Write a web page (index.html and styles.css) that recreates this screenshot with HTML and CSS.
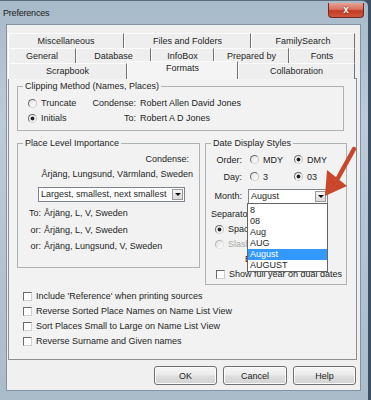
FILE: index.html
```html
<!DOCTYPE html>
<html lang="en">
<head>
    <meta charset="UTF-8">
    <meta name="viewport" content="width=device-width, initial-scale=1.0">
    <link rel="stylesheet" href="styles.css">
</head>
<body>
    <div class="window">
        <div class="titlebar">
            <span class="title">Preferences</span>
            <span class="close">x</span>
        </div>

        <div class="client">
            <div class="tabs">
                <div class="tab-row row-1">
                    <div class="tab">Miscellaneous</div>
                    <div class="tab">Files and Folders</div>
                    <div class="tab">FamilySearch</div>
                </div>
                <div class="tab-row row-2">
                    <div class="tab">General</div>
                    <div class="tab">Database</div>
                    <div class="tab">InfoBox</div>
                    <div class="tab">Prepared by</div>
                    <div class="tab">Fonts</div>
                </div>
                <div class="tab-row row-3">
                    <div class="tab">Scrapbook</div>
                    <div class="tab active">Formats</div>
                    <div class="tab">Collaboration</div>
                </div>
            </div>

            <div class="panel">
                <fieldset class="group clip">
                    <legend>Clipping Method (Names, Places)</legend>
                    <div class="clip-grid">
                        <label class="opt"><input type="radio" name="clip" class="radio">Truncate</label>
                        <span class="key">Condense:</span>
                        <span class="val">Robert Allen David Jones</span>
                        <label class="opt"><input type="radio" name="clip" class="radio" checked>Initials</label>
                        <span class="key">To:</span>
                        <span class="val">Robert A D Jones</span>
                    </div>
                </fieldset>

                <div class="pair">
                    <fieldset class="group place">
                        <legend>Place Level Importance</legend>
                        <div class="cond">Condense:</div>
                        <div class="cond-place">Årjäng, Lungsund, Värmland, Sweden</div>
                        <div class="select place-select">
                            <span class="select-text">Largest, smallest, next smallest</span>
                            <span class="select-btn"></span>
                        </div>
                        <div class="forms">
                            <span class="key">To:</span><span>Årjäng, L, V, Sweden</span>
                            <span class="key">or:</span><span>Årjäng, L, V, Sweden</span>
                            <span class="key">or:</span><span>Årjäng, Lungsund, V, Sweden</span>
                        </div>
                    </fieldset>

                    <fieldset class="group date">
                        <legend>Date Display Styles</legend>
                        <div class="date-body">
                            <div class="date-row">
                                <span class="dlabel">Order:</span>
                                <label class="opt first"><input type="radio" name="order" class="radio">MDY</label>
                                <label class="opt"><input type="radio" name="order" class="radio" checked>DMY</label>
                            </div>
                            <div class="date-row">
                                <span class="dlabel">Day:</span>
                                <label class="opt first"><input type="radio" name="day" class="radio">3</label>
                                <label class="opt"><input type="radio" name="day" class="radio" checked>03</label>
                            </div>
                            <div class="month-row">
                                <span class="dlabel">Month:</span>
                                <div class="select month">
                                    <span class="select-text">August</span>
                                    <span class="select-btn"></span>
                                    <div class="listbox">
                                        <div>8</div>
                                        <div>08</div>
                                        <div>Aug</div>
                                        <div>AUG</div>
                                        <div class="sel">August</div>
                                        <div>AUGUST</div>
                                    </div>
                                </div>
                            </div>
                            <div class="line sep-label">Separator:</div>
                            <label class="line opt indent-radio"><input type="radio" name="sep" class="radio" checked>Space</label>
                            <label class="line opt indent-radio disabled"><input type="radio" name="sep" class="radio" disabled>Slash</label>
                            <div class="line indent-b">Both</div>
                            <label class="line opt indent-check"><input type="checkbox" class="check">Show full year on dual dates</label>
                        </div>
                    </fieldset>
                </div>

                <div class="options">
                    <label class="opt"><input type="checkbox" class="check">Include 'Reference' when printing sources</label>
                    <label class="opt"><input type="checkbox" class="check">Reverse Sorted Place Names on Name List View</label>
                    <label class="opt"><input type="checkbox" class="check">Sort Places Small to Large on Name List View</label>
                    <label class="opt"><input type="checkbox" class="check">Reverse Surname and Given names</label>
                </div>
            </div>

            <div class="buttons">
                <button type="button" class="btn">OK</button>
                <button type="button" class="btn wide">Cancel</button>
                <button type="button" class="btn">Help</button>
            </div>
        </div>
    </div>

    <svg class="arrow" width="371" height="400" viewBox="0 0 371 400">
        <line x1="354" y1="149" x2="338" y2="178" stroke="#c9482b" stroke-width="4.5" stroke-linecap="round"/>
        <polygon points="325,196 327,170 347,186" fill="#c9482b"/>
    </svg>
</body>
</html>
```

FILE: styles.css
```css
body {
    margin: 0;
    width: 371px;
    height: 400px;
    overflow: hidden;
    background: #3d4f63;
    font-family: "Liberation Sans", Arial, sans-serif;
    font-size: 9px;
    color: #1e1e1e;
}

.window {
    width: 368px;
    height: 400px;
    box-sizing: border-box;
    border-top: 1px solid #5d6d7a;
    border-radius: 0 6px 0 0;
    background: linear-gradient(#a7bac9, #bccbd7 30%, #aabcca);
}

.titlebar {
    display: flex;
    height: 23px;
}

.title {
    margin: 7px 0 0 3px;
    line-height: 11px;
    letter-spacing: -0.2px;
    color: #1b1b1b;
}

.close {
    margin: 2px 4px 0 auto;
    width: 36px;
    height: 15px;
    box-sizing: border-box;
    border: 1px solid #6e2a22;
    border-top: none;
    border-radius: 0 0 4px 4px;
    background: linear-gradient(#e8a294, #d9705c 45%, #c53b24 55%, #d0553c);
    color: #fff;
    font-weight: bold;
    font-size: 10px;
    line-height: 13px;
    text-align: center;
    text-shadow: 0 0 2px #4a1a12;
}

.client {
    margin: 0 7px 0 6px;
    height: 367px;
    box-sizing: border-box;
    border: 1px solid #8393a1;
    background: #f0f0f0;
    padding-top: 8px;
}

/* tabs */
.tabs {
    margin-left: 1px;
    width: 347px;
}

.tab-row {
    display: grid;
    height: 15px;
}

.row-1 { grid-template-columns: 116px 127px 104px; }
.row-2 { grid-template-columns: 68px 75px 63px 75px 66px; }
.row-3 { grid-template-columns: 119px 111px 117px; }

.tab {
    box-sizing: border-box;
    border-top: 1px solid #fbfbfb;
    border-left: 1px solid #fff;
    border-right: 1px solid #727272;
    background: #eeeeee;
    text-align: center;
    line-height: 14px;
    white-space: nowrap;
}

.tab.active {
    margin-top: -2px;
    height: 18px;
    line-height: 13px;
    background: #f4f4f4;
    position: relative;
    z-index: 1;
}

.panel {
    margin-left: 1px;
    width: 349px;
    height: 282px;
    box-sizing: border-box;
    border: 1px solid #8f8f8f;
    background: #f2f2f2;
    padding-top: 2px;
}

/* group boxes */
.group {
    margin: 0;
    padding: 0;
    min-width: 0;
    border: 1px solid #adb2b5;
}

.group legend {
    margin-left: 5px;
    padding: 0 2px;
    line-height: 11px;
}

.clip {
    margin: 0 12px 0 8px;
}

.clip-grid {
    display: grid;
    grid-template-columns: 62px 46px auto;
    padding: 4px 0 4px 10px;
    line-height: 15px;
}

.opt {
    display: flex;
    align-items: center;
    white-space: nowrap;
}

.key {
    text-align: right;
}

.val {
    padding-left: 4px;
}

.radio {
    appearance: none;
    flex: none;
    width: 9px;
    height: 9px;
    margin: 0 4px 0 0;
    box-sizing: border-box;
    border: 1px solid;
    border-color: #6c6c6c #c4c4c4 #d4d4d4 #6c6c6c;
    border-radius: 50%;
    background: linear-gradient(135deg, #e2e2e2, #fff);
}

.radio:checked {
    background: radial-gradient(circle, #222 0 1.6px, #f4f4f4 2.3px);
}

.radio:disabled {
    border-color: #b8b8b8 #e0e0e0 #e6e6e6 #b8b8b8;
}

.check {
    appearance: none;
    flex: none;
    width: 9px;
    height: 9px;
    margin: 0 4px 0 0;
    box-sizing: border-box;
    border: 1px solid;
    border-color: #6a6a6a #cfcfcf #cfcfcf #6a6a6a;
    background: #fff;
}

.pair {
    display: flex;
    align-items: flex-start;
    gap: 5px;
    margin: 7px 0 0 8px;
}

/* place level */
.place {
    width: 181px;
}

.cond {
    text-align: right;
    line-height: 15px;
    padding: 3px 10px 0 0;
}

.cond-place {
    text-align: right;
    line-height: 15px;
    padding-right: 6px;
    white-space: nowrap;
}

.select {
    display: flex;
    align-items: center;
    height: 15px;
    box-sizing: border-box;
    border: 1px solid #7f8590;
    background: #fff;
}

.select-text {
    flex: 1;
    padding-left: 2px;
    line-height: 13px;
    white-space: nowrap;
    overflow: hidden;
}

.select-btn {
    flex: none;
    width: 11px;
    height: 11px;
    margin-right: 1px;
    box-sizing: border-box;
    border: 1px solid #9a9a9a;
    background: linear-gradient(#f5f5f5, #dadada);
    display: flex;
    align-items: center;
    justify-content: center;
}

.select-btn::after {
    content: "";
    border-left: 3px solid transparent;
    border-right: 3px solid transparent;
    border-top: 3px solid #111;
}

.place-select {
    margin: 5px 0 0 20px;
    width: 147px;
}

.forms {
    display: grid;
    grid-template-columns: 23px auto;
    column-gap: 3px;
    margin-top: 3px;
    padding-bottom: 12px;
    line-height: 16.5px;
    white-space: nowrap;
}

/* date styles */
.date {
    width: 140px;
}

.date-body {
    padding: 2px 0;
}

.date-row {
    display: flex;
    align-items: center;
    height: 17px;
}

.dlabel {
    flex: none;
    width: 36px;
    margin-right: 8px;
    text-align: right;
}

.opt.first {
    width: 44px;
}

.month-row {
    display: flex;
    align-items: center;
    margin-top: 3.5px;
}

.month-row .dlabel {
    margin-right: 6px;
}

.month {
    position: relative;
    width: 80px;
}

.listbox {
    position: absolute;
    top: 13px;
    left: -2px;
    width: 81px;
    height: 69px;
    box-sizing: border-box;
    border: 1px solid #646464;
    background: #fff;
    padding-top: 1.5px;
    z-index: 2;
}

.listbox div {
    line-height: 11px;
    padding-left: 2px;
}

.listbox .sel {
    background: #3399ff;
    color: #fff;
}

.line {
    line-height: 15px;
    white-space: nowrap;
}

.sep-label {
    margin-top: 3px;
    padding-left: 5px;
}

.indent-radio { padding-left: 9px; }
.indent-b { padding-left: 39px; }
.indent-check { padding-left: 10px; }

.disabled {
    color: #a6a6a6;
}

.options {
    margin-top: 4px;
    padding-left: 14px;
    line-height: 15px;
}

/* buttons */
.buttons {
    display: flex;
    justify-content: flex-end;
    gap: 6px;
    margin-top: 6px;
    padding-right: 4px;
}

.btn {
    width: 63px;
    height: 19px;
    box-sizing: border-box;
    padding: 0;
    border: 1px solid #707070;
    border-radius: 3px;
    background: linear-gradient(#f6f6f6, #ebebeb 48%, #dedede 52%, #d3d3d3);
    box-shadow: inset 0 0 0 1px #fbfbfb;
    font: inherit;
    color: #1e1e1e;
}

.btn.wide {
    width: 64px;
}

.arrow {
    position: absolute;
    left: 0;
    top: 0;
    z-index: 3;
    pointer-events: none;
}
```
